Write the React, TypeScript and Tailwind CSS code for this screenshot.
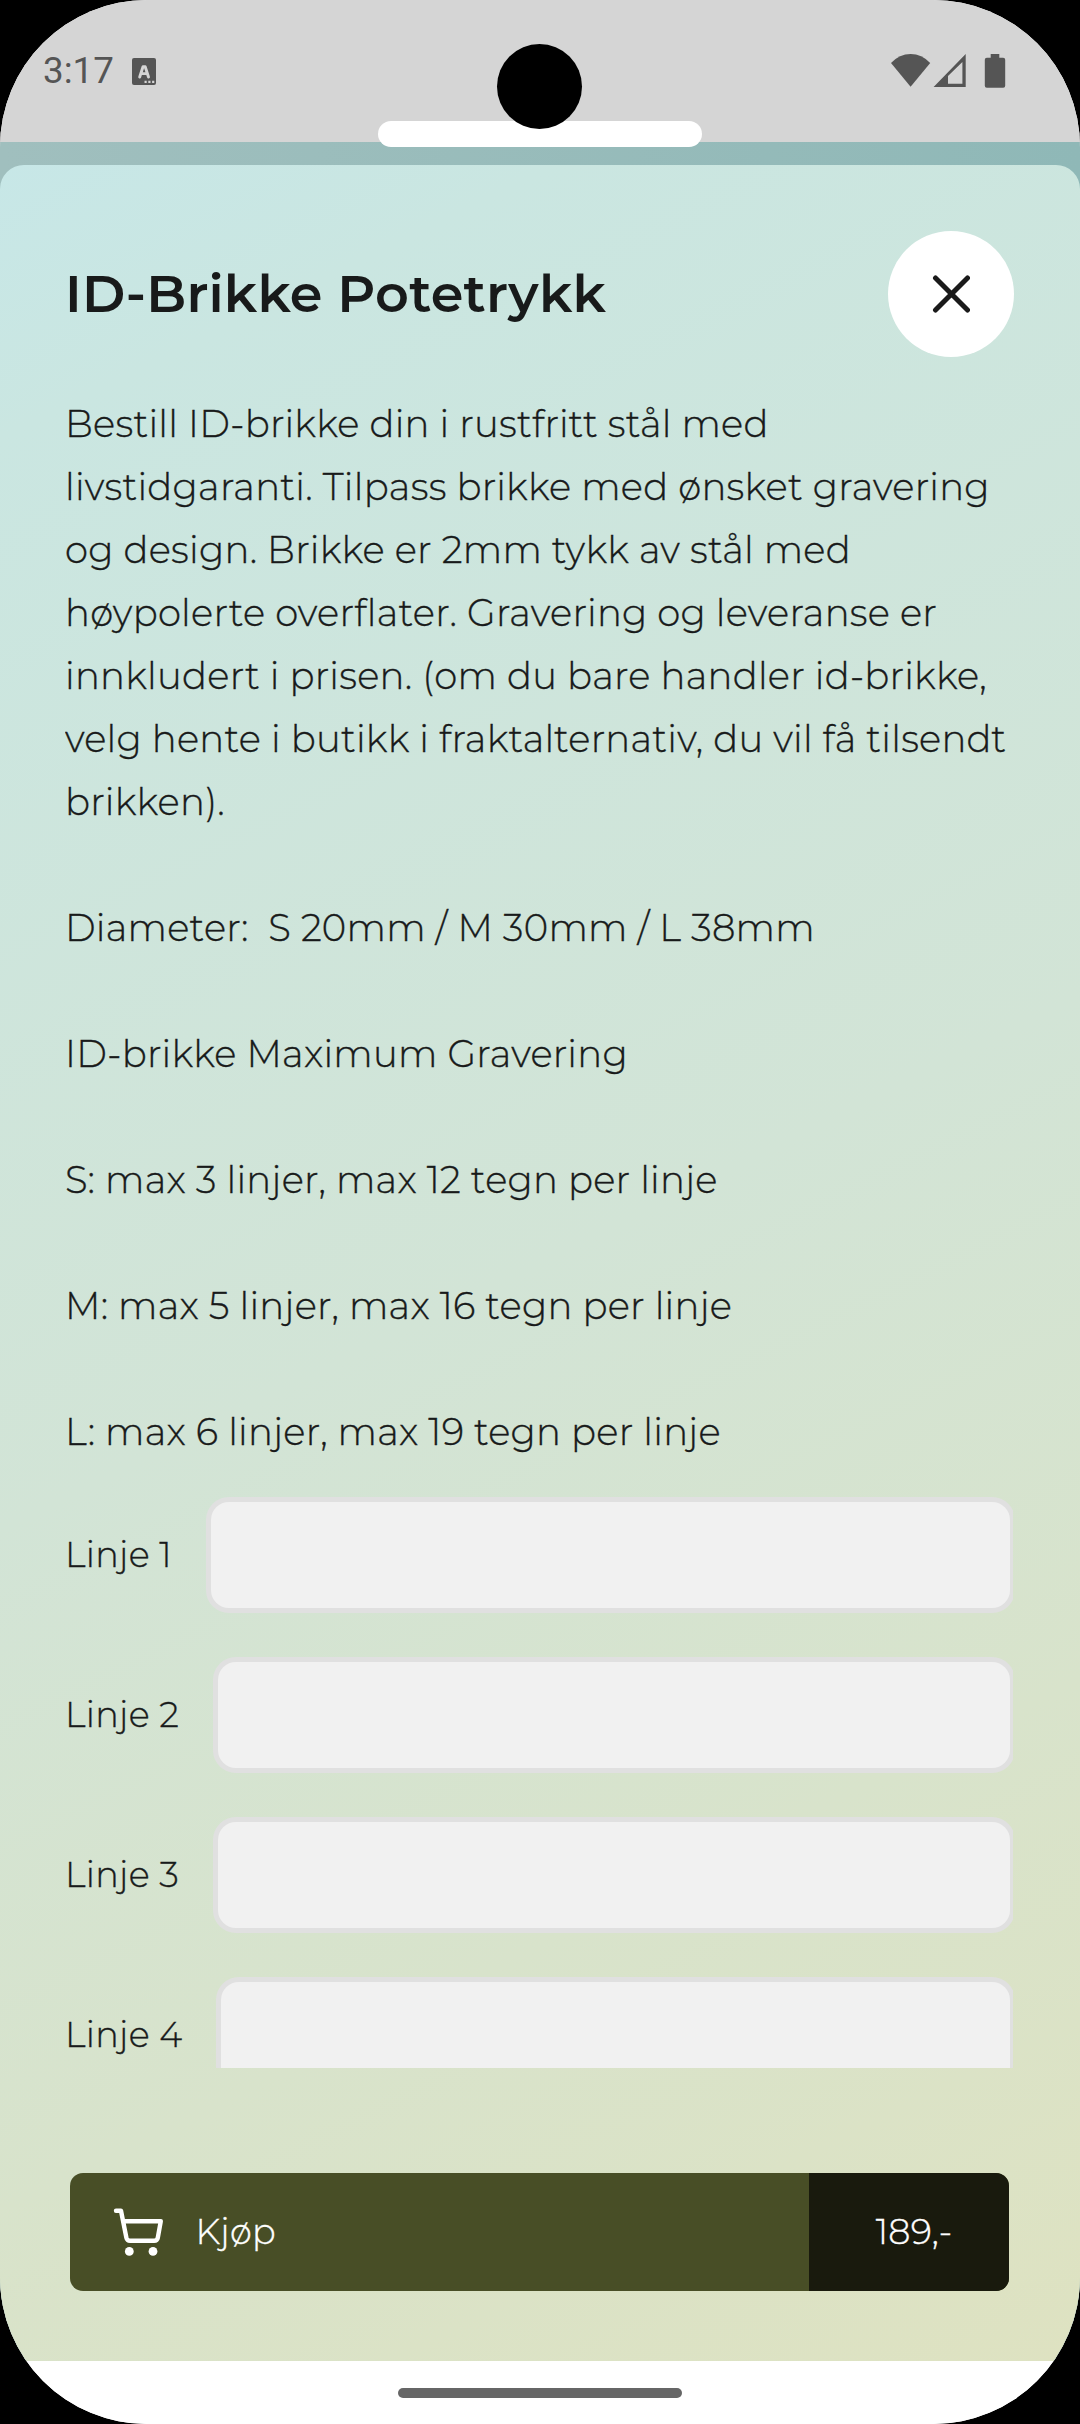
const DESCRIPTION = [
  "Bestill ID-brikke din i rustfritt stål med livstidgaranti. Tilpass brikke med ønsket gravering og design. Brikke er 2mm tykk av stål med høypolerte overflater. Gravering og leveranse er innkludert i prisen. (om du bare handler id-brikke, velg hente i butikk i fraktalternativ, du vil få tilsendt brikken).",
  "Diameter: \u00a0S 20mm / M 30mm / L 38mm",
  "ID-brikke Maximum Gravering",
  "S: max 3 linjer, max 12 tegn per linje",
  "M: max 5 linjer, max 16 tegn per linje",
  "L: max 6 linjer, max 19 tegn per linje",
];

const ENGRAVING_LINES = ["Linje 1", "Linje 2", "Linje 3", "Linje 4"];

function KeyboardIcon() {
  return (
    <svg width="24" height="27" viewBox="0 0 24 27">
      <rect width="24" height="27" rx="2" fill="#555555" />
      <path
        d="M7.7 19 11 8.7H13.2L16.5 19M8.9 15.6H15.3"
        fill="none"
        stroke="#d5d5d5"
        strokeWidth="2.9"
        strokeLinecap="round"
        strokeLinejoin="round"
      />
      <path d="M12.5 22.7h2.2v2.2h-2.2zM16.3 22.7h2.2v2.2h-2.2zM20.1 22.7h2.2v2.2h-2.2z" fill="#d5d5d5" />
    </svg>
  );
}

function StatusIcons() {
  return (
    <svg width="115" height="34" viewBox="0 0 115 34" fill="#555555">
      <path d="M0 9Q8.4 0 19.6 0T39.2 9L19.6 32.8Z" />
      <path fillRule="evenodd" d="M42.6 33 74.7 0V33ZM57 22V29.7H71.4V8Z" />
      <path d="M99.7 0h8.6v3.7h3.9a2 2 0 0 1 2 2v26a2 2 0 0 1-2 2H95.8a2 2 0 0 1-2-2v-26a2 2 0 0 1 2-2h3.9Z" />
    </svg>
  );
}

function CloseIcon() {
  return (
    <svg width="38" height="38" viewBox="0 0 38 38">
      <path d="M3.5 3 35.5 35M35.5 3 3.5 35" stroke="#1a1a1a" strokeWidth="5" strokeLinecap="round" />
    </svg>
  );
}

function CartIcon() {
  return (
    <svg width="52" height="52" viewBox="0 0 52 52">
      <path
        d="M4 4.7H9L14.4 31.8Q15.1 34.8 18 34.8H42.2Q45.2 34.8 45.8 31.8L48.8 15.2H11.4"
        fill="none"
        stroke="#ffffff"
        strokeWidth="4.4"
        strokeLinecap="round"
        strokeLinejoin="round"
      />
      <circle cx="17.3" cy="45.4" r="4.4" fill="#ffffff" />
      <circle cx="41" cy="45.4" r="4.4" fill="#ffffff" />
    </svg>
  );
}

function StatusBar() {
  return (
    <div className="flex h-[142px] shrink-0 items-start bg-[#d5d5d5] pl-[43px] text-[#555555]">
      <span className="mt-[49px] w-[72px] font-['Roboto'] text-[36.75px] leading-[43px]">3:17</span>
      <span className="mt-[57.5px] ml-[17px]">
        <KeyboardIcon />
      </span>
      <span className="mt-[54px] mr-[74px] ml-auto">
        <StatusIcons />
      </span>
    </div>
  );
}

export default function App() {
  return (
    <div className="h-[2424px] w-[1080px] bg-black font-['Montserrat','Inter',sans-serif] text-[#181a1a]">
      <div className="relative flex h-full flex-col overflow-hidden rounded-[147px] bg-white">
        <StatusBar />

        <div className="h-[2219px] shrink-0 bg-linear-to-r from-[#a0bfbe] to-[#8fb8b7] pt-[23px]">
          <section className="flex h-full flex-col rounded-t-[24px] bg-[linear-gradient(153.75deg,#c7e7e7_0%,#cae6e1_10%,#d2e4d6_50%,#d8e3cb_75%,#dee2c1_100%)]">
            <header className="flex items-start justify-between pt-[66px] pr-[66px] pl-[65px]">
              <h1 className="mt-[30px] text-[52.5px] leading-[64px] font-semibold tracking-[0.22px]">ID-Brikke Potetrykk</h1>
              <button className="flex size-[126px] items-center justify-center rounded-full bg-white" aria-label="Lukk">
                <CloseIcon />
              </button>
            </header>

            <div className="mt-[35px] mr-[67px] ml-[65px] h-[1676px] shrink-0 overflow-hidden">
              <div className="flex flex-col gap-[63px] text-[37px] leading-[63px] font-light tracking-[0.27px] [-webkit-text-stroke:0.35px_#181a1a]">
                {DESCRIPTION.map((text) => (
                  <p key={text}>{text}</p>
                ))}
              </div>
              <div className="mt-[34px] -mr-[2px] flex flex-col gap-[44px]">
                {ENGRAVING_LINES.map((label) => (
                  <label key={label} className="flex h-[116px] items-center gap-[34px] text-[35px] font-light tracking-[0.3px]">
                    <span className="shrink-0 [-webkit-text-stroke:0.35px_#181a1a]">{label}</span>
                    <input className="h-full min-w-0 flex-1 rounded-[23px] border-5 border-[#e0e0e0] bg-[#f1f1f1] px-5 outline-none" />
                  </label>
                ))}
              </div>
            </div>

            <button className="mt-[105px] ml-[69.5px] flex h-[117.5px] w-[939px] shrink-0 overflow-hidden rounded-[13px] bg-[#484e26] text-[35px] font-light tracking-[0.3px] text-white [-webkit-text-stroke:0.35px_#ffffff]">
              <span className="flex h-full flex-1 items-center pl-[42px]">
                <CartIcon />
                <span className="ml-[32px]">Kjøp</span>
              </span>
              <span className="flex h-full w-[200px] items-center justify-end bg-[#191a0d] pt-px pr-[56px]">189,-</span>
            </button>
          </section>
        </div>

        <nav className="flex flex-1 justify-center bg-white pt-[27px]">
          <div className="h-[10px] w-[284px] rounded-full bg-[#666666]" />
        </nav>

        <div className="absolute top-[120.5px] left-[378px] h-[26px] w-[324px] rounded-[13px] bg-white" />
        <div className="absolute top-[44px] left-[497px] size-[85px] rounded-full bg-black" />
      </div>
    </div>
  );
}
